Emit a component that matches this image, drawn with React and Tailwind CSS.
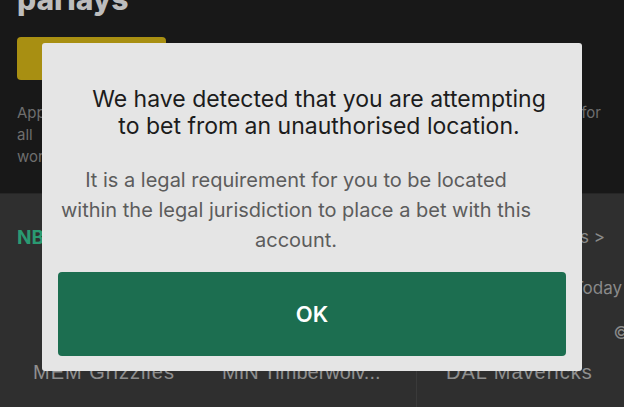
import React from "react";

export default function App() {
  return (
    <div className="relative w-[624px] h-[407px] overflow-hidden bg-[#181818] font-['Inter','Liberation_Sans',sans-serif]">
      {/* background page */}
      <div className="flex flex-col h-full">
        <div className="h-[195px] bg-[#181818] px-[17px] flex flex-col">
          <div className="-mt-[19px] text-[30px] leading-[36px] font-extrabold text-[#bdbdbd]">parlays</div>
          <div className="mt-[20px] w-[149px] h-[43px] rounded-[4px] bg-[#a88f12]" />
          <div className="mt-[22px] flex justify-between text-[15px] leading-[22px] text-[#6e6e6e]">
            <div className="flex flex-col">
              <span>Apply</span>
              <span>all</span>
              <span>worldwide</span>
            </div>
            <span className="mr-[6px]">for</span>
          </div>
        </div>
        <div className="flex-1 bg-[#2f2f2f] flex flex-col border-t border-[#262626]">
          <div className="mt-[30px] px-[17px] flex justify-between items-center">
            <span className="text-[19px] font-bold text-[#2a9a72]">NBA</span>
            <span className="text-[17px] text-[#8a8a8a] mr-[2px]">Games &gt;</span>
          </div>
          <div className="mt-[24px] px-[17px] flex justify-end">
            <span className="text-[17px] text-[#8a8a8a] mr-[-15px]">Today</span>
          </div>
          <div className="mt-[19px] flex justify-end">
            <span className="text-[17px] text-[#8a8a8a] mr-[-5px]">©</span>
          </div>
          <div className="mt-[11px] flex text-[20px] text-[#8f8f8f] font-['Liberation_Sans',sans-serif]">
            <div className="w-[205px] pl-[33px] h-[50px] flex items-start tracking-[1px]">MEM Grizzlies</div>
            <div className="w-[211px] pl-[17px] h-[50px] flex items-start">MIN Timberwolv...</div>
            <div className="flex-1 pl-[29px] h-[50px] border-l border-[#3a3a3a] flex items-start tracking-[1px]">DAL Mavericks</div>
          </div>
        </div>
      </div>

      {/* modal */}
      <div className="absolute left-[42px] top-[43px] w-[540px] h-[328px] rounded-[3px] bg-[#e5e5e5] flex flex-col pt-[43px] px-[16px] pb-[15px]">
        <div className="text-center text-[23px] leading-[27px] text-[#1c1c1c] pl-[14px]">
          We have detected that you are attempting
          <br />
          to bet from an unauthorised location.
        </div>
        <div className="mt-[25px] text-center text-[20px] leading-[30px] text-[#5c5c5c] pr-[32px]">
          It is a legal requirement for you to be located
          <br />
          within the legal jurisdiction to place a bet with this
          <br />
          account.
        </div>
        <div className="mt-auto h-[84px] rounded-[4px] bg-[#1c6e50] flex items-center justify-center text-white text-[22px] font-semibold">
          OK
        </div>
      </div>
    </div>
  );
}
